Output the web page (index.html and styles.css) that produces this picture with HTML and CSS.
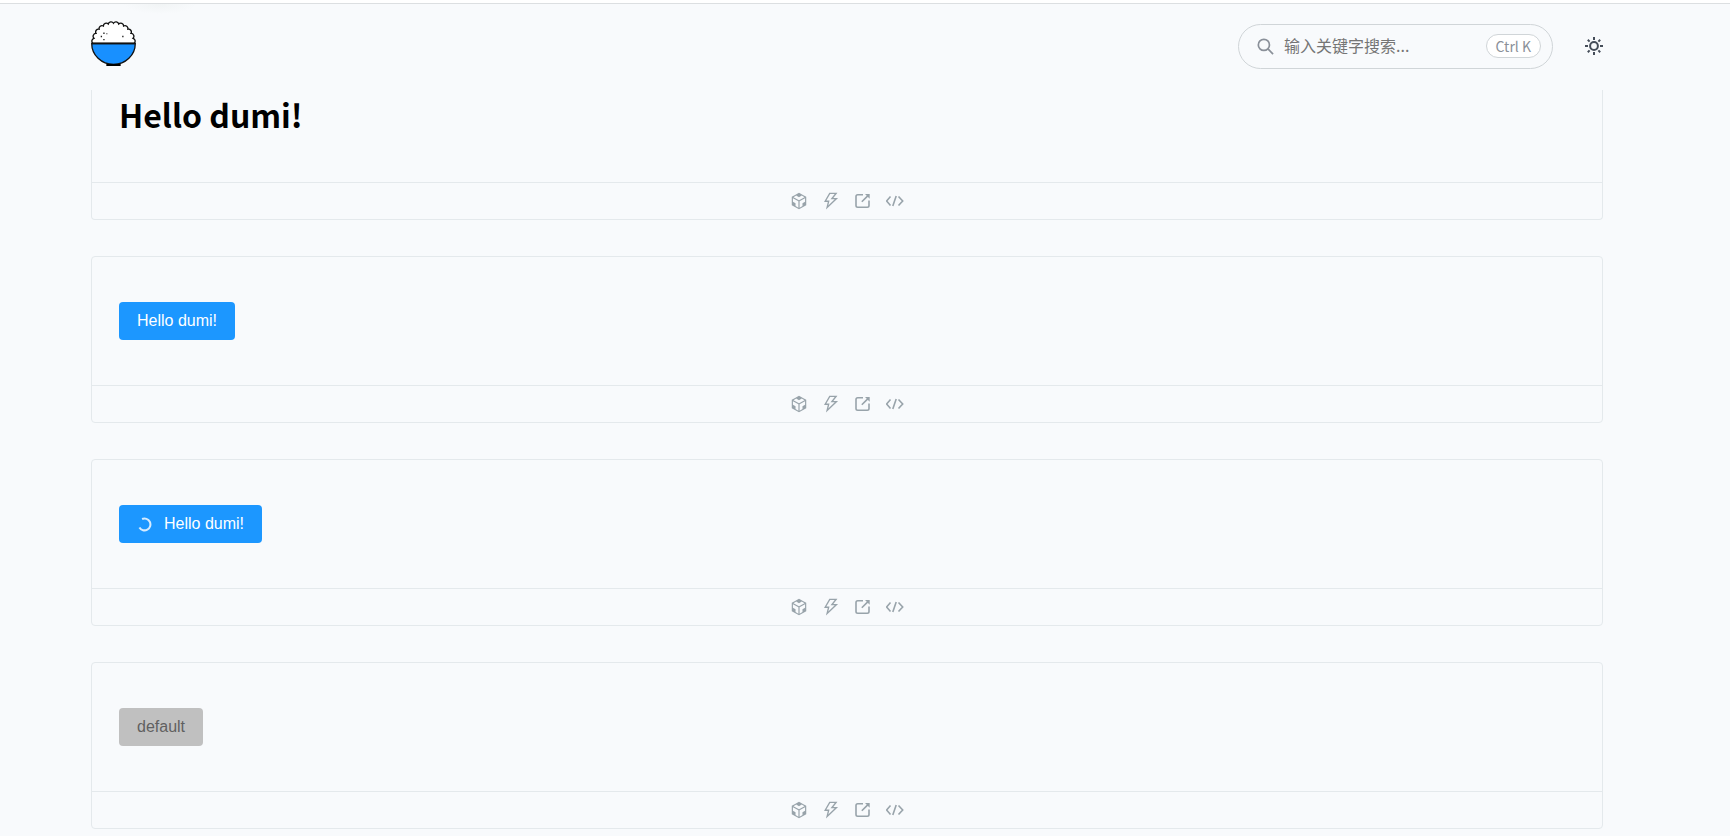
FILE: index.html
```html
<!DOCTYPE html>
<html lang="zh-CN">
<head>
  <meta charset="utf-8">
  <title>dumi</title>
  <link rel="stylesheet" href="styles.css">
</head>
<body>
  <!-- shared icon shapes -->
  <svg class="sprite" aria-hidden="true">
    <symbol id="icon-sandbox" viewBox="64 64 896 896">
      <path d="M709.6 210l.4-.2h.2L512 96 313.9 209.8h-.2l.7.3L151.5 304v416L512 928l360.5-208V304l-162.9-94zM482.7 843.6L339.6 761V621.4L210 547.8V372.9l272.7 157.3v313.4zM238.2 321.5l134.7-77.8 138.9 79.7 139.1-79.9 135.2 78-273.9 158-274-158zM814 548.3l-128.8 73.1v139.1l-143.9 83V530.4L814 373.1v175.2z"/>
    </symbol>
    <symbol id="icon-bolt" viewBox="64 64 896 896">
      <path d="M848 359.3H627.7L825.8 109c4.1-5.3.4-13-6.3-13H436c-2.8 0-5.5 1.5-6.9 4L170 547.5c-3.1 5.3.7 12 6.9 12h174.4l-89.4 357.6c-1.9 7.8 7.5 13.3 13.3 7.7L853.5 373c5.2-4.9 1.7-13.7-5.5-13.7zM378.2 732.5l60.3-241H281.1l189.6-327.4h224.6L487 427.4h211L378.2 732.5z"/>
    </symbol>
    <symbol id="icon-open" viewBox="0 0 18 18">
      <path class="line" d="M9 2.7H3.7Q2 2.7 2 4.4V13.6Q2 15.3 3.7 15.3H13.3Q15 15.3 15 13.6V8.5M7.8 9.8L14 3.6"/>
      <path d="M11 2H15.7V6.7z"/>
    </symbol>
    <symbol id="icon-code" viewBox="0 0 18 18">
      <path class="line" d="M4.5 4.5L.6 9 4.5 13.5M12.5 4.5L16.7 9 12.5 13.5M10.2 4L6.8 14"/>
    </symbol>
  </svg>

  <header class="header">
    <div class="header-content">
      <a class="logo" href="#" aria-label="dumi">
        <svg viewBox="0 0 44 44">
          <path d="M2.2 22A2.8 2.8 0 0 1 2.9 16.9A2.8 2.8 0 0 1 4.9 12.1A2.8 2.8 0 0 1 8 8A2.8 2.8 0 0 1 12.1 4.9A2.8 2.8 0 0 1 16.9 2.9A2.8 2.8 0 0 1 22 2.2A2.8 2.8 0 0 1 27.1 2.9A2.8 2.8 0 0 1 31.9 4.9A2.8 2.8 0 0 1 36 8A2.8 2.8 0 0 1 39.1 12.1A2.8 2.8 0 0 1 41.1 16.9A2.8 2.8 0 0 1 41.8 22z" fill="#fff" stroke="#111" stroke-width="1.3"/>
          <path d="M.7 22H43.3A21.3 20.5 0 0 1 .7 22z" fill="#1890ff" stroke="#111" stroke-width="1.3"/>
          <path d="M1 22H43" stroke="#111" stroke-width="1.4"/>
          <path d="M15 42H29V44H15z"/>
          <path d="M12 11.3h1.3v1.3H12zM15 12h1v1h-1zM9.5 14.5h1.3v1.3H9.5zM12 17.5h1.3v1.3H12zM30.5 14.5h1.3v1.3h-1.3z" fill="#222"/>
        </svg>
      </a>
      <div class="header-right">
        <div class="search">
          <svg class="search-icon" viewBox="0 0 18 18">
            <circle cx="7.3" cy="7.3" r="5.9"/>
            <path d="M11.6 11.6L17 17"/>
          </svg>
          <input class="search-input" type="text" aria-label="搜索" placeholder="输入关键字搜索...">
          <span class="search-shortcut">Ctrl K</span>
        </div>
        <button class="theme-switch" type="button" aria-label="Theme">
          <svg viewBox="0 0 18 18">
            <circle cx="9" cy="9" r="3.9"/>
            <path d="M9 0V3M9 15V18M0 9H3M15 9H18M2.8 2.8L4.6 4.6M13.4 13.4L15.2 15.2M2.8 15.2L4.6 13.4M13.4 4.6L15.2 2.8"/>
          </svg>
        </button>
      </div>
    </div>
  </header>

  <main class="content">
    <section class="demo demo-first">
      <div class="demo-body">
        <h1 class="demo-title">Hello dumi!</h1>
      </div>
      <div class="demo-actions">
        <button class="action" type="button" aria-label="CodeSandbox"><svg><use href="#icon-sandbox"/></svg></button>
        <button class="action" type="button" aria-label="StackBlitz"><svg><use href="#icon-bolt"/></svg></button>
        <a class="action" href="#" aria-label="Open"><svg><use href="#icon-open"/></svg></a>
        <button class="action" type="button" aria-label="Code"><svg><use href="#icon-code"/></svg></button>
      </div>
    </section>

    <section class="demo">
      <div class="demo-body">
        <button class="btn btn-primary" type="button">Hello dumi!</button>
      </div>
      <div class="demo-actions">
        <button class="action" type="button" aria-label="CodeSandbox"><svg><use href="#icon-sandbox"/></svg></button>
        <button class="action" type="button" aria-label="StackBlitz"><svg><use href="#icon-bolt"/></svg></button>
        <a class="action" href="#" aria-label="Open"><svg><use href="#icon-open"/></svg></a>
        <button class="action" type="button" aria-label="Code"><svg><use href="#icon-code"/></svg></button>
      </div>
    </section>

    <section class="demo">
      <div class="demo-body">
        <button class="btn btn-primary" type="button">
          <svg class="spinner" viewBox="0 0 16 16"><path d="M5.4 2.2A6.3 6.3 0 1 1 2.6 11.2"/></svg>
          Hello dumi!
        </button>
      </div>
      <div class="demo-actions">
        <button class="action" type="button" aria-label="CodeSandbox"><svg><use href="#icon-sandbox"/></svg></button>
        <button class="action" type="button" aria-label="StackBlitz"><svg><use href="#icon-bolt"/></svg></button>
        <a class="action" href="#" aria-label="Open"><svg><use href="#icon-open"/></svg></a>
        <button class="action" type="button" aria-label="Code"><svg><use href="#icon-code"/></svg></button>
      </div>
    </section>

    <section class="demo">
      <div class="demo-body">
        <button class="btn btn-disabled" type="button" disabled>default</button>
      </div>
      <div class="demo-actions">
        <button class="action" type="button" aria-label="CodeSandbox"><svg><use href="#icon-sandbox"/></svg></button>
        <button class="action" type="button" aria-label="StackBlitz"><svg><use href="#icon-bolt"/></svg></button>
        <a class="action" href="#" aria-label="Open"><svg><use href="#icon-open"/></svg></a>
        <button class="action" type="button" aria-label="Code"><svg><use href="#icon-code"/></svg></button>
      </div>
    </section>
  </main>
</body>
</html>
```
FILE: styles.css
```css
* {
  box-sizing: border-box;
  margin: 0;
  padding: 0;
}

body {
  background: #f8fafc;
  font-family: "Noto Sans CJK SC", sans-serif;
  color: #000;
  border-top: 3px solid #fff;
}

button {
  border: none;
  background: none;
  cursor: pointer;
}

.sprite {
  display: none;
}

.line {
  fill: none;
  stroke: currentColor;
  stroke-width: 1.6;
}

/* header */
.header {
  padding: 0 127px 0 91px;
  border-top: 1px solid #dcdfe1;
  background: radial-gradient(ellipse 36px 10px at 160px 0, #f1f4f5, #f8fafc);
}

.header-content {
  display: flex;
  align-items: center;
  justify-content: space-between;
  height: 86px;
  padding-bottom: 2px;
}

.logo svg {
  display: block;
  width: 45px;
  height: 45px;
  margin-bottom: 6px;
}

.header-right {
  display: flex;
  align-items: center;
  gap: 32px;
}

.search {
  display: flex;
  align-items: center;
  width: 315px;
  height: 45px;
  padding: 0 11px 0 18px;
  border: 1px solid #d0d5d8;
  border-radius: 23px;
}

.search-icon {
  flex: none;
  width: 17px;
  height: 17px;
  margin-right: 10px;
  fill: none;
  stroke: #8a9099;
  stroke-width: 1.8;
}

.search-input {
  flex: 1;
  min-width: 0;
  padding-bottom: 2px;
  border: none;
  outline: none;
  background: none;
  font-family: inherit;
  font-size: 16px;
}

.search-input::placeholder {
  color: #757575;
}

.search-shortcut {
  height: 24px;
  padding: 0 9px;
  border: 1px solid #d0d5d8;
  border-radius: 12px;
  background: #fff;
  color: #8a9099;
  font-size: 14px;
  line-height: 22px;
}

.theme-switch svg {
  display: block;
  width: 18px;
  height: 18px;
  fill: none;
  stroke: #454d59;
  stroke-width: 2;
}

/* demos */
.content {
  display: flex;
  flex-direction: column;
  gap: 36px;
  padding: 0 127px 8px 91px;
}

.demo {
  border: 1px solid #e4e9ec;
  border-radius: 4px;
}

.demo-first {
  border-top: none;
  border-radius: 0 0 4px 4px;
}

.demo-body {
  display: flex;
  padding: 45px 27px;
}

.demo-first .demo-body {
  padding: 0 27px 44px;
}

.demo-title {
  font-size: 32px;
  font-weight: 700;
  line-height: 48px;
}

.demo-actions {
  display: flex;
  align-items: center;
  justify-content: center;
  gap: 14px;
  height: 37px;
  border-top: 1px solid #e4e9ec;
}

.action {
  color: #98a3aa;
}

.action svg {
  display: block;
  width: 18px;
  height: 18px;
  fill: currentColor;
}

.btn {
  display: flex;
  align-items: center;
  gap: 12px;
  height: 38px;
  padding: 0 18px;
  border-radius: 4px;
  font-family: "Liberation Sans", Arial, sans-serif;
  font-size: 16px;
}

.btn-primary {
  background: #1c97ff;
  color: #fff;
}

.btn-disabled {
  background: #c0c0c0;
  color: #606060;
  cursor: not-allowed;
}

.spinner {
  width: 15px;
  height: 15px;
  fill: none;
  stroke: #d5ebff;
  stroke-width: 2.2;
}
```
